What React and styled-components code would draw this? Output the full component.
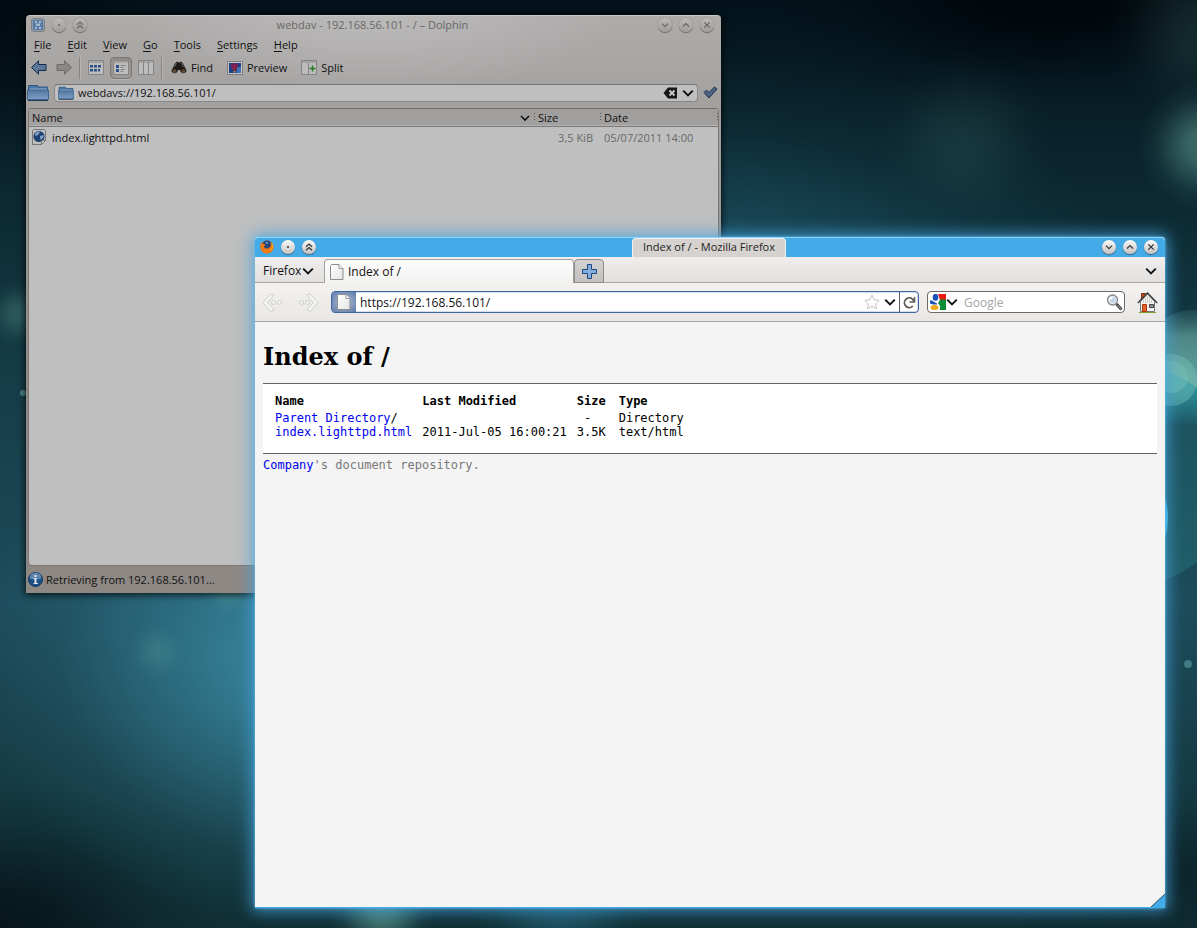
import React from "react";
import styled, { createGlobalStyle, css } from "styled-components";

const GlobalStyle = createGlobalStyle`
  *, *::before, *::after { box-sizing: border-box; }
  html, body { margin: 0; }
  body { background: #04141b; font-family: "Open Sans", "Noto Sans", sans-serif; font-size: 11px; color: #111; }
  button, input { font: inherit; color: inherit; }
  a { color: #0000ee; text-decoration: none; }
  svg { display: block; flex: none; }
`;

/* ---------- desktop ---------- */

const Desktop = styled.main`
  position: relative;
  min-height: 100vh;
  overflow: hidden;
`;

const Wallpaper = styled.svg`
  position: absolute;
  inset: 0;
  width: 100%;
  height: 100%;
`;

const WindowFrame = styled.section`
  position: absolute;
  display: flex;
  flex-direction: column;
`;

const DolphinFrame = styled(WindowFrame)`
  inset: 15px 476px 335px 26px;
  border-radius: 4px 4px 0 0;
  border-top: 1px solid #cac9c8;
  background:
    radial-gradient(ellipse 240px 80px at 50% 0, rgba(200, 200, 200, 0.5), rgba(200, 200, 200, 0)),
    linear-gradient(#aeacab 0, #a2a09e 100px, #8e8884 400px, #8e8884 100%);
  box-shadow: 0 1px 7px 1px rgba(0, 0, 0, 0.75);
`;

const FirefoxFrame = styled(WindowFrame)`
  inset: 237px 32px 20px 255px;
  border-radius: 4px 4px 0 0;
  background: #f4f4f4;
  border-bottom: 1px solid #43ace8;
  box-shadow: 0 0 3px 0 #5cc4f4, 0 0 16px 3px rgba(70, 160, 220, 0.8);
`;

const TitleBar = styled.header`
  display: grid;
  grid-template-columns: 1fr auto 1fr;
  align-items: center;
  height: ${(p) => (p.$active ? 20 : 18)}px;
  padding: 0 7px 0 5px;
  flex: none;
  ${(p) =>
    p.$active &&
    css`
      background: #43ace8;
      border-top: 1px solid #8fd0f8;
      border-radius: 4px 4px 0 0;
    `}
`;

const TitleGroup = styled.div`
  display: flex;
  gap: 7px;
  padding-bottom: 1px;
  justify-content: ${(p) => (p.$end ? "flex-end" : "flex-start")};
`;

const InactiveTitle = styled.h2`
  margin: 0;
  font-size: 11px;
  line-height: 18px;
  font-weight: 400;
  color: #696765;
`;

const ActiveTitle = styled.h2`
  margin: 0;
  align-self: stretch;
  padding: 0 10px;
  font-size: 11px;
  line-height: 16px;
  font-weight: 400;
  color: #222;
  background: #d6d2cf;
  border: solid #f2f2f2;
  border-width: 1px 1px 0;
  border-radius: 4px 4px 0 0;
`;

const RoundButton = styled.button`
  display: grid;
  place-items: center;
  width: 14px;
  height: 14px;
  padding: 0;
  border: 0;
  border-radius: 50%;
  color: ${(p) => (p.$active ? "#333" : "#686664")};
  background: ${(p) =>
    p.$active ? "linear-gradient(#fbfbfb, #c4c2c0)" : "linear-gradient(#bbbab9, #a09e9c)"};
  box-shadow: 0 1px 1px ${(p) => (p.$active ? "#46647a" : "#6d6a68")}, 0 0 1px 0
    ${(p) => (p.$active ? "rgba(60,110,150,.6)" : "rgba(90,88,86,.8)")};
`;

const glyphs = {
  dot: <circle cx="5" cy="5" r="1" fill="currentColor" stroke="none" />,
  shade: <path d="M2 4.800 5 2l3 2.800M2 8.300 5 5.500l3 2.800" />,
  down: <path d="M2 3.700 5 6.700l3-3" />,
  up: <path d="M2 6.500 5 3.500l3 3" />,
  close: <path d="m2.300 2.300 5.400 5.400m0-5.400L2.300 7.700" />,
};

function WindowButton({ glyph, label, active }) {
  return (
    <RoundButton $active={active} aria-label={label}>
      <svg width="10" height="10" fill="none" stroke="currentColor" strokeWidth="1.2">
        {glyphs[glyph]}
      </svg>
    </RoundButton>
  );
}

/* ---------- shared drawings ---------- */

const Chevron = ({ size = 10 }) => (
  <svg width={size} height={size} viewBox="0 0 10 10" fill="none" stroke="#111" strokeWidth="1.6">
    <path d="M1 3l4 4 4-4" />
  </svg>
);

const PageIcon = () => (
  <svg width="14" height="16" viewBox="0 0 14 16">
    <defs>
      <linearGradient id="pg" x1="0" y1="0" x2="1" y2="1">
        <stop offset="0" stopColor="#fff" />
        <stop offset="1" stopColor="#e4e4e4" />
      </linearGradient>
    </defs>
    <path d="M1.500.5h7.500l4 4v11H.5V1.500z" fill="url(#pg)" stroke="#8c8c8c" />
    <path d="M9 .5v4h4" fill="#fafafa" stroke="#9a9a9a" />
  </svg>
);

const FolderIcon = ({ width, height }) => (
  <svg width={width} height={height} viewBox="0 0 22 17" preserveAspectRatio="none">
    <path d="M1.500 1.500h9l1 1.500h9v12h-19z" fill="#4c78a8" stroke="#2f5683" />
    <path d="M3 4.500h17V8H3z" fill="#8fa9c8" />
    <path d="M.5 6h21v9.500H.5z" fill="url(#fold)" stroke="#3c6595" />
    <defs>
      <linearGradient id="fold" x1="0" y1="0" x2="0" y2="1">
        <stop offset="0" stopColor="#55789f" />
        <stop offset="1" stopColor="#7e9dc4" />
      </linearGradient>
    </defs>
    <path d="M1 16.500h20" stroke="#25384d" />
  </svg>
);

/* ---------- file manager ---------- */

const MenuBar = styled.nav`
  display: flex;
  height: 21px;
  flex: none;
`;

const MenuItem = styled.button`
  padding: 0 8px;
  border: 0;
  background: none;
  line-height: 20px;
  u { text-underline-offset: 2px; }
`;

const ToolBar = styled.div`
  display: flex;
  align-items: center;
  height: 25px;
  padding-left: 2px;
  flex: none;
`;

const Tool = styled.button`
  display: flex;
  align-items: center;
  justify-content: center;
  gap: 4px;
  height: 22px;
  min-width: ${(p) => (p.$label ? 0 : 22)}px;
  margin-right: ${(p) => (p.$label ? 6 : 3)}px;
  padding: ${(p) => (p.$label ? "0 3px" : 0)};
  border: 1px solid ${(p) => (p.$checked ? "#7a7775" : "transparent")};
  border-radius: 4px;
  background: ${(p) => (p.$checked ? "#9c9a98" : "none")};
  box-shadow: ${(p) => (p.$checked ? "inset 0 1px 2px #858280, 0 1px 0 #b8b6b4" : "none")};
`;

const Divider = styled.span`
  width: 2px;
  height: 22px;
  margin: 0 4px 0 1px;
  background: linear-gradient(90deg, #868482 50%, #b9b7b5 50%);
`;

const LocationRow = styled.div`
  display: flex;
  align-items: center;
  gap: 5px;
  height: 25px;
  padding: 0 3px 0 1px;
  margin-bottom: 3px;
  flex: none;
`;

const LocationField = styled.label`
  display: flex;
  align-items: center;
  gap: 4px;
  flex: 1;
  min-width: 0;
  height: 18px;
  padding: 0 3px;
  border: 1px solid #8a8785;
  border-top-color: #757270;
  border-radius: 4px;
  background: #bfbfbf;
`;

const BareInput = styled.input`
  flex: 1;
  min-width: 0;
  padding: 0;
  border: 0;
  outline: 0;
  background: none;
  &::placeholder { color: #a4a4a4; opacity: 1; }
`;

const IconButton = styled.button`
  display: grid;
  place-items: center;
  padding: 0;
  border: 0;
  background: none;
`;

const FilePane = styled.div`
  flex: 1;
  min-height: 0;
  margin: 0 2px;
  border: 1px solid #7a7775;
  border-top-color: #706d6b;
  border-radius: 4px;
  background: #bfbfbf;
  overflow: hidden;
`;

const FileTable = styled.table`
  width: 100%;
  border-collapse: separate;
  border-spacing: 0;
  table-layout: fixed;
  thead tr { background: linear-gradient(#9f9d9b, #a4a2a0); }
`;

const FileHeader = styled.th`
  width: ${(p) => p.$width};
  height: 18px;
  padding: 0 0 0 3px;
  border-bottom: 1px solid #7c7a78;
  box-shadow: inset 0 -1px 0 #b4b2b0;
  font-weight: 400;
  text-align: left;
`;

const HeaderLabel = styled.div`
  display: flex;
  justify-content: space-between;
  align-items: center;
`;

const HeaderHandle = styled.span`
  display: flex;
  align-items: center;
  gap: 4px;
  &::after {
    content: "";
    width: 1px;
    height: 9px;
    background: repeating-linear-gradient(#5c5a58 0 1px, transparent 1px 3px);
  }
`;

const FileCell = styled.td`
  height: 20px;
  padding: 0 ${(p) => (p.$end ? 8 : 0)}px 0 3px;
  text-align: ${(p) => (p.$end ? "right" : "left")};
  color: ${(p) => (p.$dim ? "#696969" : "#111")};
  white-space: nowrap;
`;

const FileName = styled.div`
  display: flex;
  align-items: center;
  gap: 6px;
`;

const StatusBar = styled.footer`
  display: flex;
  align-items: center;
  gap: 3px;
  height: 27px;
  padding-left: 2px;
  flex: none;
`;

const DolphinLogo = () => (
  <svg width="14" height="14">
    <rect x=".5" y=".5" width="13" height="13" rx="2" fill="#929ba4" stroke="#7c7f83" />
    <path d="M2 2h10v10H2z" fill="#557ba6" />
    <path d="M4 3h2v2H4zM8 3h2v2H8zM5 5.500h4V8H5zM4 9h2v2H4zM8 9h2v2H8z" fill="#a7b9cc" />
  </svg>
);

const Arrow = ({ flip, dim }) => (
  <svg width="16" height="15" viewBox="0 0 16 15">
    <path
      d={flip ? "M15.500 7.500 8.500.800V4.500H1v6h7.500v3.700z" : "M.5 7.500l7-6.700V4.500H15v6H7.500v3.700z"}
      fill={dim ? "#8a8886" : "#5b7799"}
      stroke={dim ? "#6d6b69" : "#152b49"}
      strokeLinejoin="round"
    />
  </svg>
);

const ViewIcon = ({ kind }) => (
  <svg width="16" height="15">
    <path d="M.5.5h15v14H.5z" fill="#bdbdbd" stroke="#858381" />
    <path d="M1 1h14v2H1z" fill="#a5a4a3" />
    {kind === "icons" && (
      <path d="M2 5h3v2.500H2zM6 5h3v2.500H6zM10 5h3v2.500h-3zM2 9h3v2.500H2zM6 9h3v2.500H6zM10 9h2v2.500h-2z" fill="#2b5288" />
    )}
    {kind === "details" && (
      <>
        <path d="M3 5h3v3H3zM3 9h3v3H3z" fill="#2b5288" />
        <path d="M7.500 5.500H13M7.500 7.500h3M7.500 9.500H12M7.500 11.500h3" stroke="#898989" />
      </>
    )}
    {kind === "columns" && <path d="M5.500 2v12M10.500 2v12" stroke="#858381" />}
  </svg>
);

const Binoculars = () => (
  <svg width="16" height="15" viewBox="0 0 16 15">
    <path d="M4 3.500 6 1.500l1.500 1h1l1.500-1 2 2 3.500 7c0 3-4.500 4-6 1L9 10H7l-.5 1.500c-1.500 3-6 2-6-1z" fill="#1d1a18" />
    <circle cx="3.500" cy="11" r="2" fill="#5f4b35" />
    <circle cx="12.500" cy="11" r="2" fill="#5f4b35" />
    <path d="M5.500 3 3.500 7M10.500 3l2 4" stroke="#6b6764" />
  </svg>
);

const PreviewIcon = () => (
  <svg width="16" height="14">
    <path d="M.5.5h15v13H.5z" fill="#c4c4c4" stroke="#7f7d7b" />
    <path d="M2 2h12v10H2z" fill="#1b3e86" />
    <path d="M10 6h4v6h-4z" fill="#4174b4" />
    <path d="M4 4.500C4 1.500 11 1.500 11 4.500S9 8.500 8.500 9.500h-2C6 8.500 4 7.500 4 4.500" fill="#8e2546" />
    <path d="M6 3v4M9 3v4" stroke="#5a1d6e" />
    <path d="M6.500 10h2v1.500h-2z" fill="#c58b37" />
  </svg>
);

const SplitIcon = () => (
  <svg width="16" height="15">
    <path d="M.5.5h15v14H.5z" fill="#bcbcbc" stroke="#858381" />
    <path d="M1 1h14v2H1z" fill="#a5a4a3" />
    <path d="M7.500 3v11" stroke="#858381" />
    <path d="M11.500 5.500v6M8.500 8.500h6" stroke="#237a23" strokeWidth="1.500" />
  </svg>
);

const ClearIcon = () => (
  <svg width="15" height="12">
    <path d="M5 .5h9v11H5L.5 6z" fill="#161616" />
    <path d="m6.500 3.500 5 5m0-5-5 5" stroke="#c4c4c4" strokeWidth="2" />
  </svg>
);

const CheckIcon = () => (
  <svg width="15" height="13">
    <path d="m1 6.500 2.500-2.500L6 6.500 11.500 1 14 3 6 12z" fill="#4c6583" stroke="#1c2f49" />
  </svg>
);

const HtmlFileIcon = () => (
  <svg width="14" height="16">
    <path d="M1.500.5h11l1 1v10l-4 4H.5v-14z" fill="#bebebe" stroke="#777" />
    <circle cx="7" cy="7.500" r="5.500" fill="#1c4172" />
    <path d="M3 5c1-2 4-3 5-2L6 6 3.500 7zM8 7l3.500-1c.5 2-1 4-3 5z" fill="#86a3c3" />
    <path d="M9.500 15.500v-4h4z" fill="#d0d0d0" stroke="#777" />
  </svg>
);

const InfoIcon = () => (
  <svg width="15" height="15">
    <circle cx="7.500" cy="7.500" r="7" fill="#1b4f86" stroke="#12365f" />
    <path d="M1.500 6.500a6 6 0 0 1 12 0q-6 2-12 0" fill="#5f86ac" />
    <path d="M6.500 3h2v2h-2zM5.500 6h3v5h1.500v1H5.500v-1h1V7h-1z" fill="#dfe4ea" />
  </svg>
);

const menus = ["File", "Edit", "View", "Go", "Tools", "Settings", "Help"];

function Dolphin() {
  return (
    <DolphinFrame aria-label="Dolphin">
      <TitleBar>
        <TitleGroup>
          <DolphinLogo />
          <WindowButton glyph="dot" label="All desktops" />
          <WindowButton glyph="shade" label="Shade" />
        </TitleGroup>
        <InactiveTitle>webdav - 192.168.56.101 - / – Dolphin</InactiveTitle>
        <TitleGroup $end>
          <WindowButton glyph="down" label="Minimize" />
          <WindowButton glyph="up" label="Maximize" />
          <WindowButton glyph="close" label="Close" />
        </TitleGroup>
      </TitleBar>
      <MenuBar>
        {menus.map((m) => (
          <MenuItem key={m}>
            <u>{m[0]}</u>
            {m.slice(1)}
          </MenuItem>
        ))}
      </MenuBar>
      <ToolBar>
        <Tool aria-label="Back"><Arrow /></Tool>
        <Tool aria-label="Forward"><Arrow flip dim /></Tool>
        <Divider />
        <Tool aria-label="Icons"><ViewIcon kind="icons" /></Tool>
        <Tool aria-label="Details" $checked><ViewIcon kind="details" /></Tool>
        <Tool aria-label="Columns"><ViewIcon kind="columns" /></Tool>
        <Divider />
        <Tool $label><Binoculars />Find</Tool>
        <Tool $label><PreviewIcon />Preview</Tool>
        <Tool $label><SplitIcon />Split</Tool>
      </ToolBar>
      <LocationRow>
        <FolderIcon width={22} height={17} />
        <LocationField>
          <FolderIcon width={16} height={14} />
          <BareInput aria-label="Location" defaultValue="webdavs://192.168.56.101/" />
          <IconButton aria-label="Clear"><ClearIcon /></IconButton>
          <IconButton aria-label="History"><Chevron size={12} /></IconButton>
        </LocationField>
        <IconButton aria-label="Go"><CheckIcon /></IconButton>
      </LocationRow>
      <FilePane>
        <FileTable>
          <thead>
            <tr>
              <FileHeader $width="auto">
                <HeaderLabel>Name<HeaderHandle><Chevron /></HeaderHandle></HeaderLabel>
              </FileHeader>
              <FileHeader $width="66px">
                <HeaderLabel>Size<HeaderHandle /></HeaderLabel>
              </FileHeader>
              <FileHeader $width="117px">
                <HeaderLabel>Date<HeaderHandle /></HeaderLabel>
              </FileHeader>
            </tr>
          </thead>
          <tbody>
            <tr>
              <FileCell><FileName><HtmlFileIcon />index.lighttpd.html</FileName></FileCell>
              <FileCell $dim $end>3,5 KiB</FileCell>
              <FileCell $dim>05/07/2011 14:00</FileCell>
            </tr>
          </tbody>
        </FileTable>
      </FilePane>
      <StatusBar><InfoIcon />Retrieving from 192.168.56.101...</StatusBar>
    </DolphinFrame>
  );
}

/* ---------- browser ---------- */

const TabStrip = styled.div`
  display: flex;
  align-items: flex-end;
  height: 26px;
  flex: none;
  font-size: 12px;
  background: linear-gradient(#efeeed, #e2e0de);
  box-shadow: inset 0 -1px 0 #a9a6a3;
`;

const AppMenu = styled.button`
  display: flex;
  align-items: center;
  gap: 1px;
  width: 69px;
  height: 25px;
  padding: 0 8px;
  border: 0;
  background: none;
`;

const Tab = styled.button`
  display: flex;
  align-items: center;
  gap: 4px;
  width: 250px;
  height: 24px;
  padding: 0 5px;
  border: 1px solid #a29f9c;
  border-bottom: 0;
  border-radius: 4px 4px 0 0;
  background: linear-gradient(#fdfdfd, #f3f2f1);
`;

const NewTab = styled.button`
  display: grid;
  place-items: center;
  width: 30px;
  height: 24px;
  padding: 0;
  border: 1px solid #8e8b89;
  border-radius: 4px 4px 0 0;
  background: linear-gradient(#d4d2d0, #c3c1bf);
`;

const TabList = styled(IconButton)`
  margin-left: auto;
  width: 29px;
  height: 25px;
`;

const NavBar = styled.div`
  display: flex;
  align-items: center;
  height: 39px;
  padding: 0 7px;
  flex: none;
  font-size: 12px;
  background: linear-gradient(#f3f2f1, #e9e7e5);
  border-bottom: 1px solid #a9a6a3;
`;

const HistoryButtons = styled.div`
  display: flex;
  gap: 15px;
  margin-right: 12px;
`;

const UrlField = styled.label`
  display: flex;
  align-items: center;
  flex: 1;
  min-width: 0;
  height: 22px;
  border: 1px solid #3e66a0;
  border-radius: 4px;
  background: #fff;
  box-shadow: inset 0 0 0 1px #d3dff0;
  overflow: hidden;
`;

const Identity = styled.span`
  display: grid;
  place-items: center;
  align-self: stretch;
  width: 24px;
  margin-right: 4px;
  background: radial-gradient(#b9c5da, #5a78a8);
`;

const ChevronSlot = styled(IconButton)`
  width: 18px;
  margin-left: 1px;
`;

const ReloadButton = styled(IconButton)`
  align-self: stretch;
  width: 19px;
  border-left: 1px solid #5a5a5a;
`;

const SearchField = styled.label`
  display: flex;
  align-items: center;
  width: 198px;
  height: 22px;
  margin: 0 12px 0 8px;
  padding: 0 1px 0 2px;
  border: 1px solid #6c6a68;
  border-radius: 4px;
  background: #fff;
`;

const SearchInput = styled(BareInput)`
  padding-left: 6px;
`;

const Page = styled.article`
  flex: 1;
  padding: 19px 8px;
  color: #000;
  font-family: "DejaVu Sans Mono", monospace;
  font-size: 12px;
`;

const PageTitle = styled.h1`
  margin: 0 0 10px;
  font-family: "DejaVu Serif", serif;
  font-size: 24px;
  line-height: 32px;
`;

const Listing = styled.div`
  padding: 10px 12px 14px;
  border: solid #646464;
  border-width: 1px 0;
  background: #fff;
`;

const IndexTable = styled.table`
  border-collapse: collapse;
  line-height: 14px;
  th { padding-bottom: 3px; }
`;

const IndexCell = styled.td`
  padding: 0 ${(p) => (p.$wide ? 13 : 10)}px 0 0;
  font-weight: ${(p) => (p.as === "th" ? 700 : 400)};
  text-align: ${(p) => (p.$end ? "right" : "left")};
  white-space: pre;
`;

const PageFooter = styled.p`
  margin: 4px 0 0;
  line-height: 14px;
  color: #787878;
`;

const ResizeGrip = styled.svg`
  position: absolute;
  right: 0;
  bottom: 0;
`;

const FirefoxLogo = () => (
  <svg width="14" height="14">
    <circle cx="7" cy="7" r="6.500" fill="#d9560c" />
    <circle cx="7" cy="5" r="4.500" fill="#24467c" />
    <path d="M5 2.500c1-1 3-1 3.500 0l-1 2z" fill="#5f93c8" />
    <path d="M.8 2.500C2 4.500 4 3 5.500 5c-1 .8-1.500 1-1.500 2 1 2 4 2 5.500.5 1.500-1.500 1.500-3.500 1-5.500C14 4.500 14 8 12.500 10.500c-2 3.500-8 4-10.700.5C0 8.500.2 5 .8 2.500" fill="#ee7a14" />
    <path d="M12 3.500c1.500 3 0 6-2 7" fill="none" stroke="#fbc02a" />
  </svg>
);

const PlusIcon = () => (
  <svg width="15" height="15">
    <path d="M5.500.5h4v5h5v4h-5v5h-4v-5h-5v-4h5z" fill="#84add9" stroke="#1c4684" />
  </svg>
);

const HistoryArrow = ({ flip }) => (
  <svg width="21" height="19" viewBox="0 0 21 19" fill="#f3f3f2" stroke="#cfcecc">
    <g transform={flip ? "translate(21 0) scale(-1 1)" : undefined}>
      <path d="m.7 9.500 8-8.500 3.500 1-6.500 7.500 6.500 7.500-3.500 1.500z" />
      <circle cx="11.500" cy="9.500" r="2" />
      <circle cx="17.500" cy="9.500" r="2" />
    </g>
  </svg>
);

const StarIcon = () => (
  <svg width="16" height="16" fill="#fff" stroke="#c3c3c3">
    <path d="m8 1 2.200 4.700 5 .6-3.700 3.500 1 5L8 12.300l-4.500 2.500 1-5L.8 6.300l5-.6z" />
  </svg>
);

const ReloadIcon = () => (
  <svg width="13" height="13" fill="none" stroke="#5d5953" strokeWidth="1.800">
    <path d="M9.800 10A4.800 4.800 0 1 1 9.500 3.200L11 5" />
    <path d="M11.500 1v5h-5" strokeWidth="1.500" />
  </svg>
);

const GoogleIcon = () => (
  <svg width="16" height="16">
    <path d="M0 0h16v16H0z" fill="#fff" />
    <path d="M8 0h8v6H10z" fill="#e61b12" />
    <path d="M10 5.500h6V16H9.500C11 13 10 11 8 9.500z" fill="#0b8c35" />
    <ellipse cx="5.500" cy="3.300" rx="2.800" ry="3.500" fill="#1650bb" />
    <path d="M0 6.500h2.500c.5 2 4 1.500 5 4H3L0 9.500z" fill="#1650bb" />
    <ellipse cx="4.500" cy="13.500" rx="4" ry="2.500" fill="#f2ab13" />
  </svg>
);

const SearchIcon = () => (
  <svg width="17" height="17">
    <path d="m10.500 10 5 5.500" stroke="#444" strokeWidth="3" />
    <path d="m11.500 11 4 4.500" stroke="#a4a4a4" strokeWidth="1" />
    <circle cx="6.500" cy="6" r="5" fill="#e2ebf4" stroke="#858585" strokeWidth="1.300" />
    <circle cx="6.500" cy="6" r="3" fill="#c3d7ec" />
    <path d="M4 6a2.500 2.500 0 0 1 2.500-2.500" fill="none" stroke="#fff" strokeWidth="1.500" />
  </svg>
);

const HomeIcon = () => (
  <svg width="21" height="21">
    <path d="M4.500 1.500h4V8h-4z" fill="#c8461c" stroke="#7c2f1a" />
    <path d="M3.500 9.500 10.500 2l7 7.500v10h-14z" fill="#f3f3f2" stroke="#777" />
    <path d="M6.500 8v3M8.500 6v5M10.500 4v7M12.500 6v5M14.500 8v3" stroke="#cfcfcd" />
    <path d="m.8 11 9.700-10 9.700 10" fill="none" stroke="#3f4442" strokeWidth="1.500" />
    <path d="M5.500 12.500h4v7h-4z" fill="#e2622c" stroke="#a8370c" />
    <path d="M12.500 12.500h4v3h-4z" fill="#8d9299" stroke="#444" />
    <path d="M2 20.500h17" stroke="#7ea02c" />
  </svg>
);

function Firefox() {
  return (
    <FirefoxFrame aria-label="Mozilla Firefox">
      <TitleBar $active>
        <TitleGroup>
          <FirefoxLogo />
          <WindowButton active glyph="dot" label="All desktops" />
          <WindowButton active glyph="shade" label="Shade" />
        </TitleGroup>
        <ActiveTitle>Index of / - Mozilla Firefox</ActiveTitle>
        <TitleGroup $end>
          <WindowButton active glyph="down" label="Minimize" />
          <WindowButton active glyph="up" label="Maximize" />
          <WindowButton active glyph="close" label="Close" />
        </TitleGroup>
      </TitleBar>
      <TabStrip>
        <AppMenu>Firefox<Chevron size={12} /></AppMenu>
        <Tab><PageIcon />Index of /</Tab>
        <NewTab aria-label="New tab"><PlusIcon /></NewTab>
        <TabList aria-label="List all tabs"><Chevron size={12} /></TabList>
      </TabStrip>
      <NavBar>
        <HistoryButtons>
          <IconButton aria-label="Back"><HistoryArrow /></IconButton>
          <IconButton aria-label="Forward"><HistoryArrow flip /></IconButton>
        </HistoryButtons>
        <UrlField>
          <Identity><PageIcon /></Identity>
          <BareInput aria-label="Address" defaultValue="https://192.168.56.101/" />
          <IconButton aria-label="Bookmark"><StarIcon /></IconButton>
          <ChevronSlot aria-label="Recent addresses"><Chevron size={12} /></ChevronSlot>
          <ReloadButton aria-label="Reload"><ReloadIcon /></ReloadButton>
        </UrlField>
        <SearchField>
          <GoogleIcon />
          <Chevron size={12} />
          <SearchInput aria-label="Search" placeholder="Google" />
          <IconButton aria-label="Search"><SearchIcon /></IconButton>
        </SearchField>
        <IconButton aria-label="Home"><HomeIcon /></IconButton>
      </NavBar>
      <Page>
        <PageTitle>Index of /</PageTitle>
        <Listing>
          <IndexTable>
            <thead>
              <tr>
                <IndexCell as="th">Name</IndexCell>
                <IndexCell as="th">Last Modified</IndexCell>
                <IndexCell as="th" $wide>Size</IndexCell>
                <IndexCell as="th">Type</IndexCell>
              </tr>
            </thead>
            <tbody>
              <tr>
                <IndexCell><a href="#parent">Parent Directory</a>/</IndexCell>
                <IndexCell />
                <IndexCell $wide $end>{"-  "}</IndexCell>
                <IndexCell>Directory</IndexCell>
              </tr>
              <tr>
                <IndexCell><a href="#index">index.lighttpd.html</a></IndexCell>
                <IndexCell>2011-Jul-05 16:00:21</IndexCell>
                <IndexCell $wide $end>3.5K</IndexCell>
                <IndexCell>text/html</IndexCell>
              </tr>
            </tbody>
          </IndexTable>
        </Listing>
        <PageFooter><a href="#company">Company</a>'s document repository.</PageFooter>
      </Page>
      <ResizeGrip width="14" height="13">
        <path d="M14 0v13H0z" fill="#43ace8" />
        <path d="M14 0 0 13" stroke="#2a4c66" />
      </ResizeGrip>
    </FirefoxFrame>
  );
}

const softFade = [[0, 1], [0.25, 0.85], [0.5, 0.5], [0.75, 0.15], [1, 0]];

function Glow({ id, color, strength = 1 }) {
  return (
    <radialGradient id={id}>
      {softFade.map(([offset, opacity]) => (
        <stop key={offset} offset={offset} stopColor={color} stopOpacity={opacity * strength} />
      ))}
    </radialGradient>
  );
}

export default function App() {
  return (
    <Desktop>
      <GlobalStyle />
      <Wallpaper viewBox="0 0 1197 928" preserveAspectRatio="xMidYMid slice" aria-hidden="true">
        <defs>
          <linearGradient id="sky" x1="0" y1="0" x2="0" y2="1">
            <stop offset="0" stopColor="#03121a" />
            <stop offset=".16" stopColor="#0a232c" />
            <stop offset=".4" stopColor="#153c47" />
            <stop offset=".65" stopColor="#1d4c5b" />
            <stop offset=".85" stopColor="#153a43" />
            <stop offset="1" stopColor="#102e34" />
          </linearGradient>
          <Glow id="teal" color="#3b8ba3" />
          <Glow id="mist" color="#26677c" strength={0.8} />
          <Glow id="pale" color="#6fb3a6" strength={0.8} />
          <Glow id="dark" color="#00060b" />
          <linearGradient id="bubble" x1="0" y1="0" x2="0" y2="1">
            <stop offset="0" stopColor="#4d8a8a" stopOpacity=".2" />
            <stop offset=".3" stopColor="#5c9a96" stopOpacity=".8" />
            <stop offset="1" stopColor="#67b0a6" />
          </linearGradient>
          <linearGradient id="orb" x1="0" y1="0" x2="0" y2="1">
            <stop offset="0" stopColor="#2f9da4" />
            <stop offset=".12" stopColor="#2b8d98" />
            <stop offset=".28" stopColor="#1d5360" />
            <stop offset="1" stopColor="#205e69" />
          </linearGradient>
        </defs>
        <rect width="1197" height="928" fill="url(#sky)" />
        <ellipse cx="320" cy="660" rx="350" ry="270" fill="url(#teal)" opacity=".9" />
        <ellipse cx="680" cy="370" rx="480" ry="330" fill="url(#mist)" />
        <ellipse cx="1050" cy="0" rx="280" ry="110" fill="url(#dark)" />
        <ellipse cx="0" cy="30" rx="200" ry="160" fill="url(#dark)" opacity=".6" />
        <ellipse cx="0" cy="928" rx="220" ry="150" fill="url(#dark)" opacity=".6" />
        <ellipse cx="1150" cy="870" rx="160" ry="90" fill="url(#dark)" opacity=".35" />
        <circle cx="965" cy="140" r="90" fill="url(#pale)" opacity=".15" />
        <circle cx="1197" cy="30" r="90" fill="url(#pale)" opacity=".2" />
        <circle cx="1204" cy="145" r="66" fill="url(#pale)" opacity=".65" />
        <circle cx="157" cy="652" r="30" fill="url(#pale)" opacity=".25" />
        <circle cx="18" cy="314" r="34" fill="url(#pale)" opacity=".35" />
        <circle cx="23" cy="393" r="3" fill="#4b8482" />
        <circle cx="228" cy="585" r="28" fill="url(#pale)" opacity=".5" />
        <circle cx="382" cy="910" r="54" fill="url(#pale)" opacity=".7" />
        <circle cx="560" cy="920" r="90" fill="url(#mist)" opacity=".7" />
        <circle cx="1192" cy="354" r="44" fill="url(#bubble)" />
        <circle cx="1130" cy="475" r="110" fill="url(#orb)" />
        <circle cx="1172" cy="377" r="16" fill="#7cc4bc" opacity=".4" />
        <circle cx="1171" cy="380" r="26" fill="#7cc4bc" opacity=".4" />
        <ellipse cx="1140" cy="518" rx="28" ry="44" fill="#3fb8e0" />
        <circle cx="1188" cy="664" r="4" fill="#3f7a82" />
      </Wallpaper>
      <Dolphin />
      <Firefox />
    </Desktop>
  );
}
